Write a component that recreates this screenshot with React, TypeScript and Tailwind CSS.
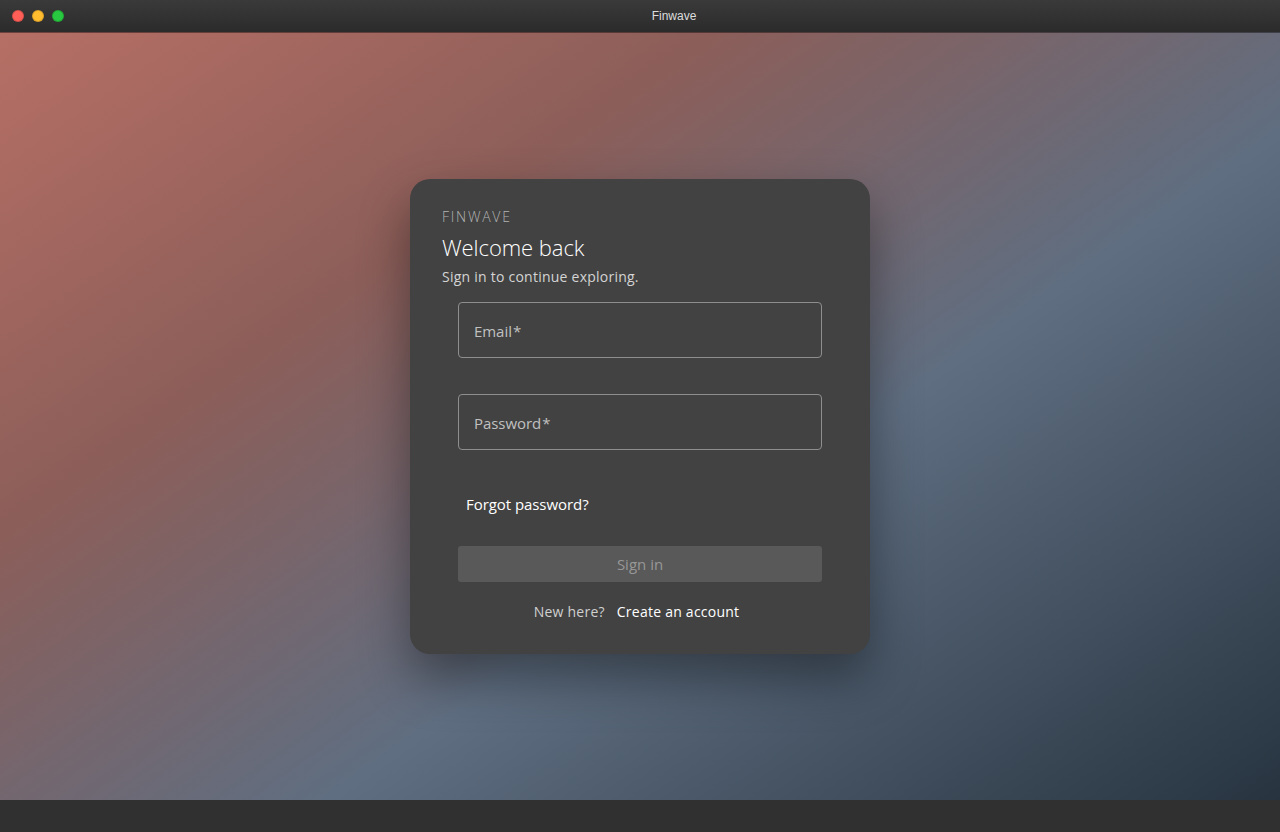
import React from 'react';

interface FieldProps {
  label: string;
}

const Field: React.FC<FieldProps> = ({ label }) => (
  <label className="flex h-14 items-center rounded border border-[#8e8e8e] px-[15px] pt-[2px] text-[15px] leading-6 tracking-[-0.05px] text-[#c0c0c0]">
    <span>{label}</span>
    <span className="ml-px">*</span>
  </label>
);

const TitleBar: React.FC = () => {
  const dots = ['bg-[#ff5f57]', 'bg-[#febc2e]', 'bg-[#28c840]'];

  return (
    <header className="relative z-10 flex h-8 items-center bg-linear-to-b from-[#3a3a3a] to-[#2b2b2b] px-3 shadow-[0_1px_0_rgba(0,0,0,0.4)]">
      <div className="flex gap-2">
        {dots.map((dot) => (
          <span key={dot} className={`${dot} h-3 w-3 rounded-full border border-black/15`} />
        ))}
      </div>
      <div className="ml-4 flex-1 text-center font-['Liberation_Sans',sans-serif] text-xs text-[#dddddd]">
        Finwave
      </div>
    </header>
  );
};

const App: React.FC = () => {
  return (
    <div className="flex h-[832px] flex-col bg-[#303030] font-['Open_Sans',sans-serif]">
      <TitleBar />

      <main className="flex h-[768px] items-center justify-center bg-[linear-gradient(145deg,#b66f65_0%,#8c5e59_30%,#5f6e81_60%,#273440_100%)]">
        <section className="h-[475px] w-[460px] rounded-[20px] bg-[#424242] p-8 shadow-[0_24px_50px_rgba(0,0,0,0.4)]">
          {/* Heading */}
          <p className="mt-[-5px] text-sm leading-[22px] font-light tracking-[1.75px] text-[#b3b3b3]">FINWAVE</p>
          <h1 className="mt-[3px] text-[22px] leading-8 font-light tracking-[-0.06px] text-white">Welcome back</h1>
          <p className="mt-1 text-sm leading-5 tracking-[0.24px] text-[#d4d4d4]">Sign in to continue exploring.</p>

          {/* Form */}
          <form className="mt-[15px] flex flex-col px-4">
            <Field label="Email" />
            <div className="mt-9">
              <Field label="Password" />
            </div>
            <button type="button" className="mt-[37px] h-9 self-start px-2 text-[15px] tracking-[-0.06px] text-white">
              Forgot password?
            </button>
            <button type="button" disabled className="mt-[23px] h-9 rounded-[3px] bg-[#595959] pt-px text-[15px] text-[#979797]">
              Sign in
            </button>
          </form>

          {/* Sign up */}
          <div className="mt-5 flex items-center justify-center gap-3 pr-[7px] text-sm leading-5 tracking-[0.24px]">
            <span className="text-[#d0d0d0]">New here?</span>
            <a className="text-white">Create an account</a>
          </div>
        </section>
      </main>
    </div>
  );
};

export default App;
